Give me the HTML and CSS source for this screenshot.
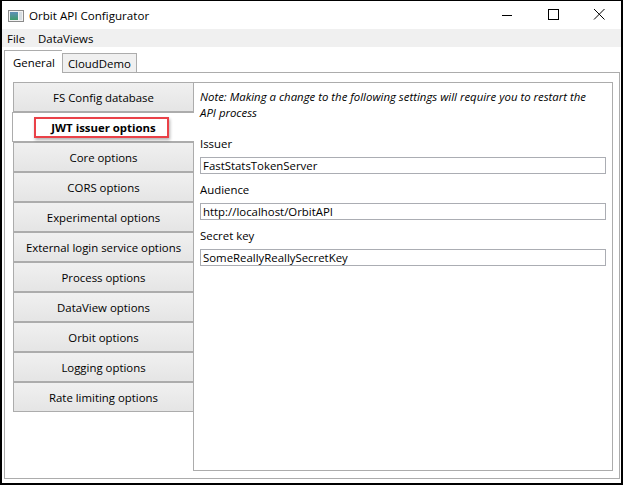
FILE: index.html
```html
<!DOCTYPE html>
<html lang="en">
<head>
  <meta charset="UTF-8">
  <title>Orbit API Configurator</title>
  <link rel="stylesheet" href="styles.css">
</head>
<body>

<div class="window">
  <div class="titlebar">
    <svg class="app-icon" width="16" height="12" viewBox="0 0 16 12">
      <defs>
        <linearGradient id="g1" x1="0" y1="0" x2="0" y2="1">
          <stop offset="0" stop-color="#5f8fb8"/>
          <stop offset="1" stop-color="#3f9a6a"/>
        </linearGradient>
      </defs>
      <rect x="0.5" y="0.5" width="15" height="11" fill="#f2f2f2" stroke="#8a8a8a"/>
      <rect x="2" y="2" width="8" height="8" fill="url(#g1)"/>
      <rect x="11" y="2" width="3" height="8" fill="#d6dde2"/>
    </svg>
    <span class="title">Orbit API Configurator</span>
    <div class="caption">
      <svg width="46" height="29" viewBox="0 0 46 29"><path d="M18 14.5h10" stroke="#000" stroke-width="1"/></svg>
      <svg width="46" height="29" viewBox="0 0 46 29"><rect x="18.5" y="8.5" width="10" height="10" fill="none" stroke="#000"/></svg>
      <svg width="46" height="29" viewBox="0 0 46 29"><path d="M18 8l10.5 10.5M28.5 8L18 18.5" stroke="#000" stroke-width="1"/></svg>
    </div>
  </div>

  <div class="menubar">
    <span class="menu-item">File</span>
    <span class="menu-item">DataViews</span>
  </div>

  <div class="tabs">
    <div class="tab active">General</div>
    <div class="tab">CloudDemo</div>
  </div>

  <div class="tab-panel">
    <div class="side-list">
      <div class="side-item">FS Config database</div>
      <div class="side-item selected">
        JWT issuer options
        <span class="highlight"></span>
      </div>
      <div class="side-item">Core options</div>
      <div class="side-item">CORS options</div>
      <div class="side-item">Experimental options</div>
      <div class="side-item">External login service options</div>
      <div class="side-item">Process options</div>
      <div class="side-item">DataView options</div>
      <div class="side-item">Orbit options</div>
      <div class="side-item">Logging options</div>
      <div class="side-item">Rate limiting options</div>
    </div>

    <div class="content">
      <p class="note">Note: Making a change to the following settings will require you to restart the<br>API process</p>

      <label class="field-label first">Issuer</label>
      <input class="field" type="text" value="FastStatsTokenServer">

      <label class="field-label">Audience</label>
      <input class="field" type="text" value="http://localhost/OrbitAPI">

      <label class="field-label">Secret key</label>
      <input class="field" type="text" value="SomeReallyReallySecretKey">
    </div>
  </div>
</div>

</body>
</html>
```

FILE: styles.css
```css
* {
  box-sizing: border-box;
}

body {
  margin: 0;
  font-family: "Open Sans", "Noto Sans", sans-serif;
  font-size: 11.4px;
  color: #000;
  background: #fff;
}

.window {
  width: 623px;
  height: 485px;
  border: 2px solid #000;
  border-top-width: 1px;
  background: #fff;
  display: flex;
  flex-direction: column;
}

.titlebar {
  height: 28px;
  display: flex;
  align-items: center;
  padding-left: 6px;
}

.app-icon {
  margin-top: 1px;
}

.title {
  margin-left: 5px;
  font-size: 11.6px;
}

.caption {
  margin-left: auto;
  display: flex;
  margin-right: -1px;
}

.caption svg {
  display: block;
}

.menubar {
  height: 18px;
  background: #f0f0f0;
  display: flex;
  align-items: center;
  padding-left: 5px;
}

.menu-item {
  margin-right: 13px;
}

.tabs {
  display: flex;
  align-items: flex-end;
  padding-left: 2px;
  height: 25px;
  position: relative;
  z-index: 1;
}

.tab {
  height: 19px;
  padding: 0 5px;
  border: 1px solid #acacac;
  border-bottom: none;
  background: #f0f0f0;
  display: flex;
  align-items: center;
}

.tab.active {
  height: 23px;
  background: #fff;
  padding: 0 7px 0 8px;
  border-right: none;
  margin-bottom: -1px;
}

.tab-panel {
  flex: 1;
  margin: 0 1px 4px 2px;
  border: 1px solid #acacac;
  display: flex;
  padding: 9px 6px 7px 8px;
}

.side-list {
  width: 180px;
  display: flex;
  flex-direction: column;
}

.side-item {
  height: 30px;
  border: 1px solid #acacac;
  border-right: none;
  background: linear-gradient(#f0f0f0, #e5e5e5);
  display: flex;
  align-items: center;
  justify-content: center;
}

.side-item.selected {
  position: relative;
  z-index: 1;
  background: #fff;
  margin: 0 -1px 0 -1px;
  font-weight: bold;
}

.highlight {
  position: absolute;
  left: 21px;
  top: 4px;
  width: 135px;
  height: 21px;
  border: 2px solid #ea4148;
  box-shadow: 1px 2px 3px rgba(0, 0, 0, 0.3);
}

.content {
  flex: 1;
  border: 1px solid #acacac;
  padding: 6px 6px 0 6px;
  display: flex;
  flex-direction: column;
}

.note {
  margin: 0;
  font-style: italic;
  line-height: 16px;
}

.field-label {
  display: block;
  line-height: 16px;
  padding: 8px 0 5px;
}

.field-label.first {
  padding-top: 15px;
}

.field {
  height: 17px;
  border: 1px solid #abadb3;
  font-family: inherit;
  font-size: 11.4px;
  padding: 0 2px;
  margin: 0;
  outline: none;
  width: 100%;
}
```
